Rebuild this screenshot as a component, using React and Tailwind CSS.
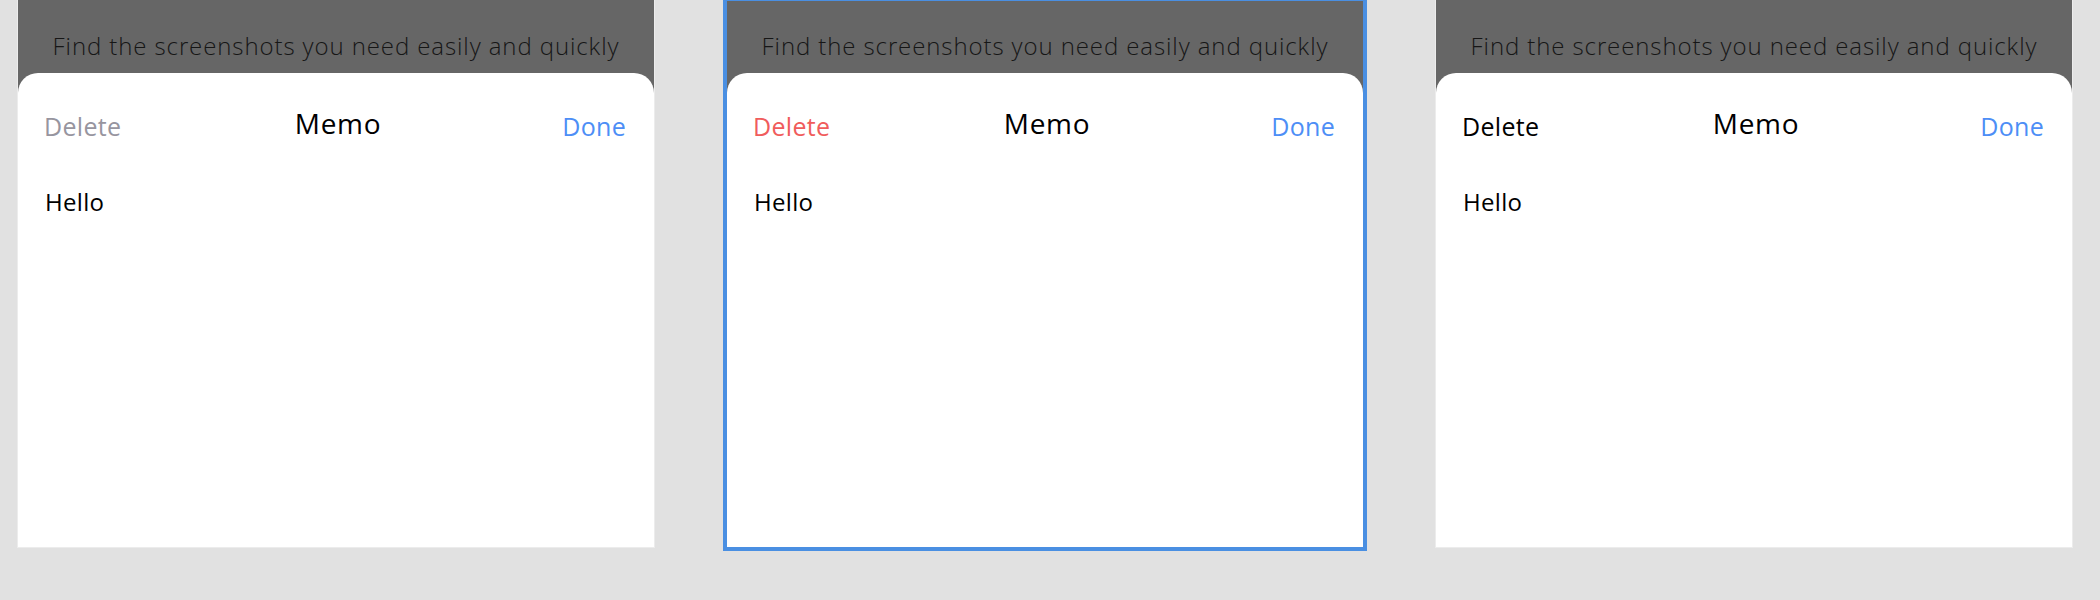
import React from 'react';

const PANELS = [
  { key: 'idle', deleteClass: 'text-[#97959f]', selected: false },
  { key: 'danger', deleteClass: 'text-[#f05c5c]', selected: true },
  { key: 'pressed', deleteClass: 'text-black', selected: false },
];

const MemoPanel = ({ deleteClass, selected }) => (
  <div
    className={`w-[638px] h-[548px] shrink-0 flex flex-col bg-[#666666] border-x border-b border-[#ececec] ${
      selected ? 'outline-4 outline-offset-[-1px] outline-[#4a8fe2]' : ''
    }`}
  >
    <div className="h-[73px] pt-[32px] text-center text-[24px] leading-[28px] font-light tracking-[0.9px] text-[#161616]">
      Find the screenshots you need easily and quickly
    </div>

    <div className="flex-1 bg-white rounded-t-[20px] pl-[26px] pr-[28px] pt-[35px]">
      <div className="grid grid-cols-[1fr_auto_1fr] items-center h-[32px]">
        <span className={`text-[25px] tracking-[0.3px] ${deleteClass}`}>Delete</span>
        <span className="text-[28px] font-medium tracking-[0.7px] text-black -mt-[8px] ml-[6px]">Memo</span>
        <span className="text-[25px] tracking-[0.3px] text-right text-[#4d8ef6]">Done</span>
      </div>
      <p className="mt-[48px] pl-[1px] text-[24px] leading-[28px] tracking-[0.3px] text-black">Hello</p>
    </div>
  </div>
);

export default function App() {
  return (
    <div
      className="w-[2100px] h-[600px] bg-[#e1e1e1] flex gap-[71px] pl-[17px] overflow-hidden"
      style={{ fontFamily: '"Open Sans", "Liberation Sans", sans-serif' }}
    >
      {PANELS.map((p) => (
        <MemoPanel key={p.key} deleteClass={p.deleteClass} selected={p.selected} />
      ))}
    </div>
  );
}
